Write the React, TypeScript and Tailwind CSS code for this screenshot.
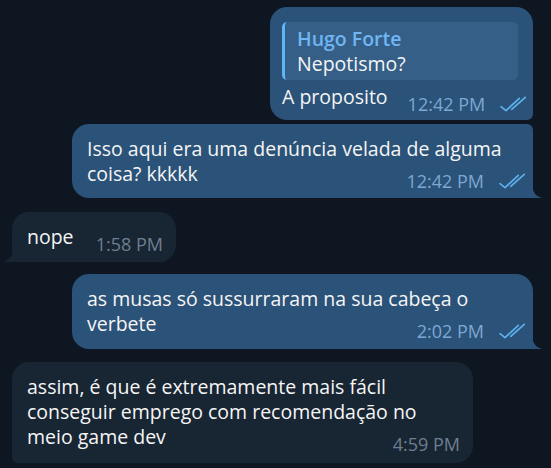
function Checks() {
  return (
    <svg className="ml-[15px] w-[27px] h-[16px] shrink-0" viewBox="0 0 27 16" fill="none">
      <path d="M1 10.7 L6 14.6 L19.3 2.3" stroke="#5eb0ee" strokeWidth="1.7" strokeLinecap="round" strokeLinejoin="round" />
      <path d="M11.7 13.3 L25.3 1.3" stroke="#5eb0ee" strokeWidth="1.7" strokeLinecap="round" />
    </svg>
  );
}

function LastLine({ text, time, out }: { text: string; time: string; out?: boolean }) {
  return (
    <div className="flex items-end">
      <span className="whitespace-nowrap">{text}</span>
      <span className="ml-auto pl-5 -mb-[5px] flex items-center h-[20px] shrink-0">
        <span className={`text-[18px] leading-[20px] ${out ? "text-[#7da8d3]" : "text-[#6d7f8f]"}`}>{time}</span>
        {out && <Checks />}
      </span>
    </div>
  );
}

function TailOut() {
  return (
    <svg className="absolute right-[-9px] bottom-0 w-[10px] h-[16px]" viewBox="0 0 10 16">
      <path d="M0 0 C0 9 3 14 10 16 L0 16 Z" fill="#2b5278" />
    </svg>
  );
}

function TailIn() {
  return (
    <svg className="absolute left-[-9px] bottom-0 w-[10px] h-[16px]" viewBox="0 0 10 16">
      <path d="M10 0 C10 9 7 14 0 16 L10 16 Z" fill="#182533" />
    </svg>
  );
}

export default function App() {
  return (
    <div
      className="w-[551px] h-[468px] overflow-hidden bg-[#0e1621] text-[#f5f5f5] text-[19.5px] leading-[25px] flex flex-col pt-[7px]"
      style={{ fontFamily: "'Open Sans', 'Noto Sans', sans-serif" }}
    >
      {/* outgoing group */}
      <div className="self-end mr-[18px] flex flex-col items-end gap-1">
        <div className="w-[263px] bg-[#2b5278] rounded-[17px] rounded-br-[6px] pl-3 pr-[7px] pt-[15px] pb-[11px] flex flex-col gap-1">
          <div className="mr-2 rounded-[5px] border-l-[3px] border-[#5eb5f7] bg-[#365f88] pl-[12px] py-1">
            <div className="font-semibold text-[#6fb6f2]">Hugo Forte</div>
            <div>Nepotismo?</div>
          </div>
          <LastLine text="A proposito" time="12:42 PM" out />
        </div>

        <div className="relative w-[461px] bg-[#2b5278] rounded-[17px] rounded-tr-[6px] rounded-br-none pl-[15px] pr-[7px] pt-3 pb-3">
          <div>Isso aqui era uma denúncia velada de alguma</div>
          <LastLine text="coisa? kkkkk" time="12:42 PM" out />
          <TailOut />
        </div>
      </div>

      {/* incoming */}
      <div className="relative self-start ml-3 mt-[14px] w-[164px] bg-[#182533] rounded-[17px] rounded-bl-none pl-[15px] pr-[13px] pt-3 pb-[13px]">
        <LastLine text="nope" time="1:58 PM" />
        <TailIn />
      </div>

      <div className="relative self-end mr-[18px] mt-3 w-[461px] bg-[#2b5278] rounded-[17px] rounded-br-none pl-[15px] pr-[7px] pt-3 pb-[13px]">
        <div>as musas só sussurraram na sua cabeça o</div>
        <LastLine text="verbete" time="2:02 PM" out />
        <TailOut />
      </div>

      <div className="self-start ml-3 mt-[13px] w-[461px] shrink-0 bg-[#182533] rounded-[17px] rounded-bl-[6px] pl-[15px] pr-[13px] pt-3 pb-[14px]">
        <div>assim, é que é extremamente mais fácil</div>
        <div>conseguir emprego com recomendação no</div>
        <LastLine text="meio game dev" time="4:59 PM" />
      </div>
    </div>
  );
}
